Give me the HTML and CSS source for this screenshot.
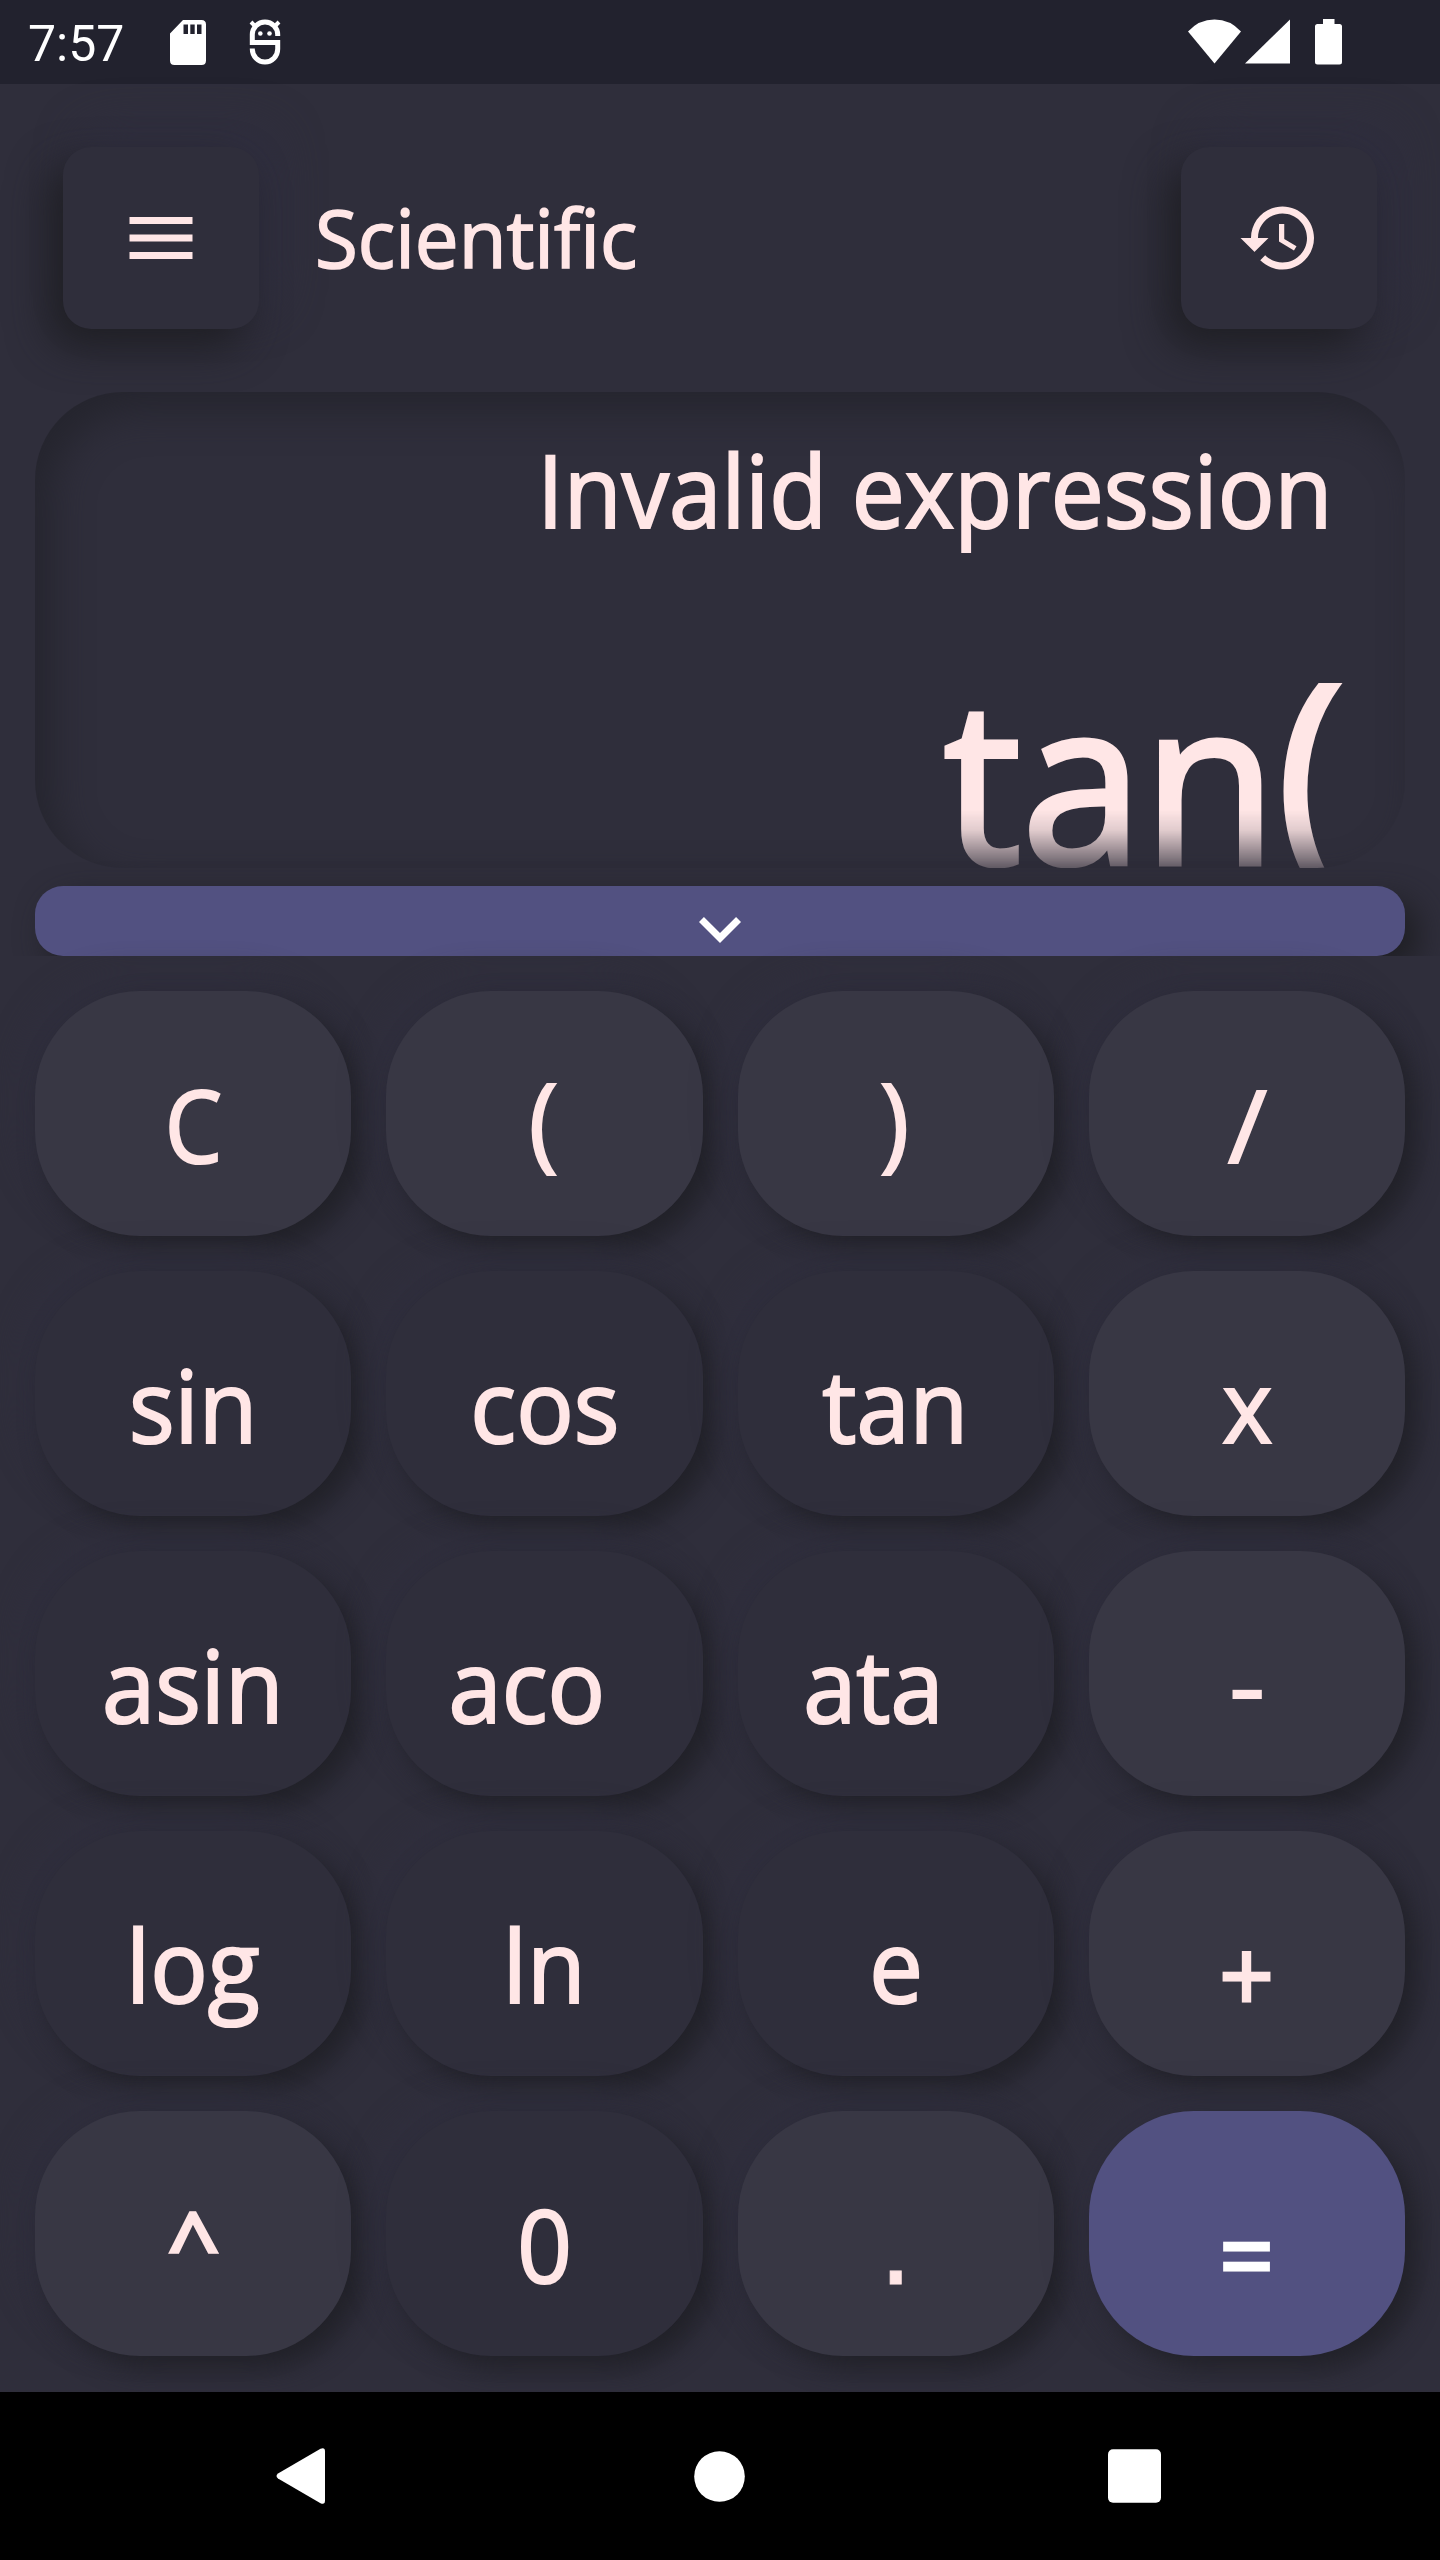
FILE: index.html
```html
<!DOCTYPE html>
<html lang="en">
<head>
<meta charset="utf-8">
<title>Scientific calculator</title>
<link rel="stylesheet" href="styles.css">
</head>
<body>
<div class="phone">
  <header class="status">
    <span class="clock">7:57</span>
    <svg class="sd" width="36" height="45" viewBox="0 0 36 45"><path fill="#fff" fill-rule="evenodd" d="M13 0H31.500Q36 0 36 4.500V40.500Q36 45 31.500 45H4.500Q0 45 0 40.500V13.500ZM13.500 4.500V14H18V4.500ZM20.300 4.500V14H24.700V4.500ZM27 4.500V14H31.500V4.500Z"/></svg>
    <svg class="bug" width="32" height="46" viewBox="0 0 32 46"><g fill="none" stroke="#fff" stroke-width="5"><path d="M28.700 17V15.500A12.700 12.500 0 0 0 3.300 15.500V23.500H28.700V30A12.700 13 0 0 1 3.300 30V29.500"/><path stroke-width="4" d="M2 3L7 8M30 3L25 8"/></g><circle cx="11.300" cy="14.500" r="2.300" fill="#fff"/><circle cx="20.500" cy="14.500" r="2.300" fill="#fff"/></svg>
    <div class="signals">
      <svg width="53" height="45" viewBox="0 0 53 45"><path fill="#fff" d="M0 12.500Q11 .5 26.500 .5T53 12.500L26.500 44.500Z"/></svg>
      <svg class="cell" width="45" height="45" viewBox="0 0 45 45"><path fill="#fff" d="M45 .5V44.500H0Z"/></svg>
      <svg class="battery" width="27" height="46" viewBox="0 0 27 46"><path fill="#fff" d="M8 0H19.500V5H24.500Q27 5 27 7.500V43Q27 45.500 24.500 45.500H2.500Q0 45.500 0 43V7.500Q0 5 2.500 5H8Z"/></svg>
    </div>
  </header>

  <div class="toolbar">
    <button class="tool"><svg width="84" height="84" viewBox="0 0 24 24"><path d="M3 18h18v-2H3v2zm0-5h18v-2H3v2zm0-7v2h18V6H3z"/></svg></button>
    <h1 class="title">Scientific</h1>
    <button class="tool"><svg width="84" height="84" viewBox="0 0 24 24"><path d="M13 3c-4.970 0-9 4.030-9 9H1l3.890 3.890.07.140L9 12H6c0-3.870 3.130-7 7-7s7 3.130 7 7-3.130 7-7 7c-1.930 0-3.680-.790-4.940-2.060l-1.420 1.420C8.270 19.990 10.510 21 13 21c4.970 0 9-4.030 9-9s-4.030-9-9-9zm-1 5v5l4.280 2.540.72-1.210-3.500-2.080V8H12z"/></svg></button>
  </div>

  <section class="screen">
    <div class="display">
      <div class="result"><span>Invalid expression</span></div>
      <div class="entry"><span>tan<span class="paren">(</span></span></div>
    </div>
    <button class="drawer"><svg width="42" height="26" viewBox="6 8.590 12 7.410"><path fill="#fff" d="M7.410 8.590L12 13.170l4.590-4.580L18 10l-6 6-6-6z"/></svg></button>
  </section>

  <main class="keys">
    <button class="key alt narrow"><span>C</span></button>
    <button class="key alt bracket"><span>(</span></button>
    <button class="key alt bracket"><span>)</span></button>
    <button class="key alt slash"><span>/</span></button>
    <button class="key"><span>sin</span></button>
    <button class="key"><span>cos</span></button>
    <button class="key"><span>tan</span></button>
    <button class="key alt"><span>x</span></button>
    <button class="key"><span>asin</span></button>
    <button class="key cut-s"><span>aco</span></button>
    <button class="key cut-n"><span>ata</span></button>
    <button class="key alt minus"><span>-</span></button>
    <button class="key"><span>log</span></button>
    <button class="key"><span>ln</span></button>
    <button class="key"><span>e</span></button>
    <button class="key alt op"><span>+</span></button>
    <button class="key alt caret"><span>^</span></button>
    <button class="key"><span>0</span></button>
    <button class="key alt dot"><span>.</span></button>
    <button class="key equals op"><span>=</span></button>
  </main>

  <nav class="nav">
    <svg width="50" height="56" viewBox="0 0 50 56"><path fill="#fff" d="M2 25.500L44.500 .8Q49 -1 49 3.500V52.500Q49 57 44.500 55.200L2 30.500Q-1 28 2 25.500Z"/></svg>
    <svg class="home" width="51" height="51" viewBox="0 0 51 51"><circle cx="25.500" cy="25.500" r="25.300" fill="#fff"/></svg>
    <svg width="53" height="54" viewBox="0 0 53 54"><rect y=".3" width="53" height="53.400" rx="5" fill="#fff"/></svg>
  </nav>
</div>
</body>
</html>
```
FILE: styles.css
```css
* { box-sizing: border-box; }

body {
  margin: 0;
  background: #2f2e3b;
  color: #ffe6e6;
  font-family: "Open Sans", "Noto Sans", sans-serif;
  font-weight: 400;
  font-variant-ligatures: none;
}

button {
  border: 0;
  padding: 0;
  color: inherit;
  font: inherit;
}

svg { display: block; flex: none; }

.phone {
  width: 1440px;
  height: 2560px;
  display: flex;
  flex-direction: column;
  overflow: hidden;
}

/* System status bar */
.status {
  height: 84px;
  flex: none;
  display: flex;
  align-items: flex-start;
  padding: 0 98px 0 28px;
  background: #22222e;
}
.clock {
  width: 142px;
  font: 400 50px/84px Roboto, sans-serif;
  color: #fff;
  padding-top: 2px;
  height: 84px;
}
.sd { margin-top: 20px; }
.bug { margin: 19px 0 0 43px; }
.signals { margin: 19px 0 0 auto; display: flex; }
.cell { margin-left: 4px; }
.battery { margin-left: 25px; }

/* Title row */
.toolbar {
  height: 308px;
  flex: none;
  display: flex;
  align-items: center;
  padding: 0 63px;
}
.tool {
  width: 196px;
  height: 182px;
  border-radius: 28px;
  background: #2f2e3b;
  display: flex;
  align-items: center;
  justify-content: center;
  box-shadow: -14px 18px 40px #1f1f24, 18px -18px 44px #302f40;
}
.tool svg { fill: #ffe6e6; }
.title {
  flex: 1;
  margin: 0 0 2px 56px;
  font-size: 81px;
  font-weight: 400;
  line-height: 110px;
  transform: scaleX(.963);
  transform-origin: 0 50%;
  -webkit-text-stroke: 1.7px #ffe6e6;
}

/* Result display and its drawer handle */
.screen {
  height: 564px;
  flex: none;
  padding: 0 35px;
  overflow: hidden;
}
.display {
  height: 476px;
  border-radius: 88px;
  overflow: hidden;
  box-shadow: inset 16px 18px 38px #25252e;
  text-align: right;
}
.result {
  height: 200px;
  padding: 29px 72px 0 0;
  font-size: 101px;
  line-height: 136px;
  -webkit-text-stroke: 2.2px #ffe6e6;
}
.result span,
.entry > span {
  display: inline-block;
  transform: scaleX(.936);
  transform-origin: 100% 50%;
}
.entry {
  height: 276px;
  padding-right: 60px;
  font-size: 228px;
  line-height: 368px;
  -webkit-text-stroke: 5px #ffe6e6;
  -webkit-mask-image: linear-gradient(#000 218px, rgba(0, 0, 0, .86) 238px, rgba(0, 0, 0, .25) 276px);
  mask-image: linear-gradient(#000 218px, rgba(0, 0, 0, .86) 238px, rgba(0, 0, 0, .25) 276px);
}
.entry > span { transform: scaleX(.958); }
.paren {
  font-size: 240px;
  line-height: 0;
  vertical-align: 7px;
}
.drawer {
  width: 100%;
  height: 70px;
  margin-top: 18px;
  border-radius: 28px;
  background: #525181;
  display: flex;
  justify-content: center;
  padding-top: 31px;
  box-shadow: 14px 14px 32px #1f1f24;
}

/* Keypad */
.keys {
  flex: 1;
  display: grid;
  grid-template-columns: repeat(4, 1fr);
  grid-auto-rows: 245px;
  gap: 35px;
  padding: 35px 35px 0;
}
.key {
  border-radius: 105px;
  background: #2f2e3b;
  font-size: 100px;
  line-height: 136px;
  padding-top: 20px;
  display: flex;
  align-items: center;
  justify-content: center;
  box-shadow: 12px 12px 26px #212128, -12px -12px 32px #302f3e;
  -webkit-text-stroke: 2.2px currentColor;
}
.key span { transform: scaleX(.957); }
.alt { background: #383744; }
.equals { background: #525181; color: #fff; }
.op { padding-top: 38px; -webkit-text-stroke-width: 3px; }
.narrow span { transform: scaleX(.91); }
.bracket { font-size: 104px; padding-top: 9px; padding-right: 2px; }
.slash span { transform: scaleX(1.06); }
.cut-s { padding-right: 36px; }
.cut-n { padding-right: 44px; }
.minus { font-size: 126px; padding-top: 10px; -webkit-text-stroke-width: 0; }
.caret { font-size: 86px; padding-top: 17px; -webkit-text-stroke-width: 3.500px; }
.caret span { transform: scaleX(1.06); }
.dot {
  font-family: "Liberation Sans", sans-serif;
  font-size: 120px;
  padding-top: 17px;
  -webkit-text-stroke-width: 1px;
}

/* System navigation bar */
.nav {
  height: 168px;
  flex: none;
  display: flex;
  align-items: center;
  justify-content: space-between;
  padding: 0 279px 0 276px;
  background: #000;
}
.home { margin-left: 5px; }
```
